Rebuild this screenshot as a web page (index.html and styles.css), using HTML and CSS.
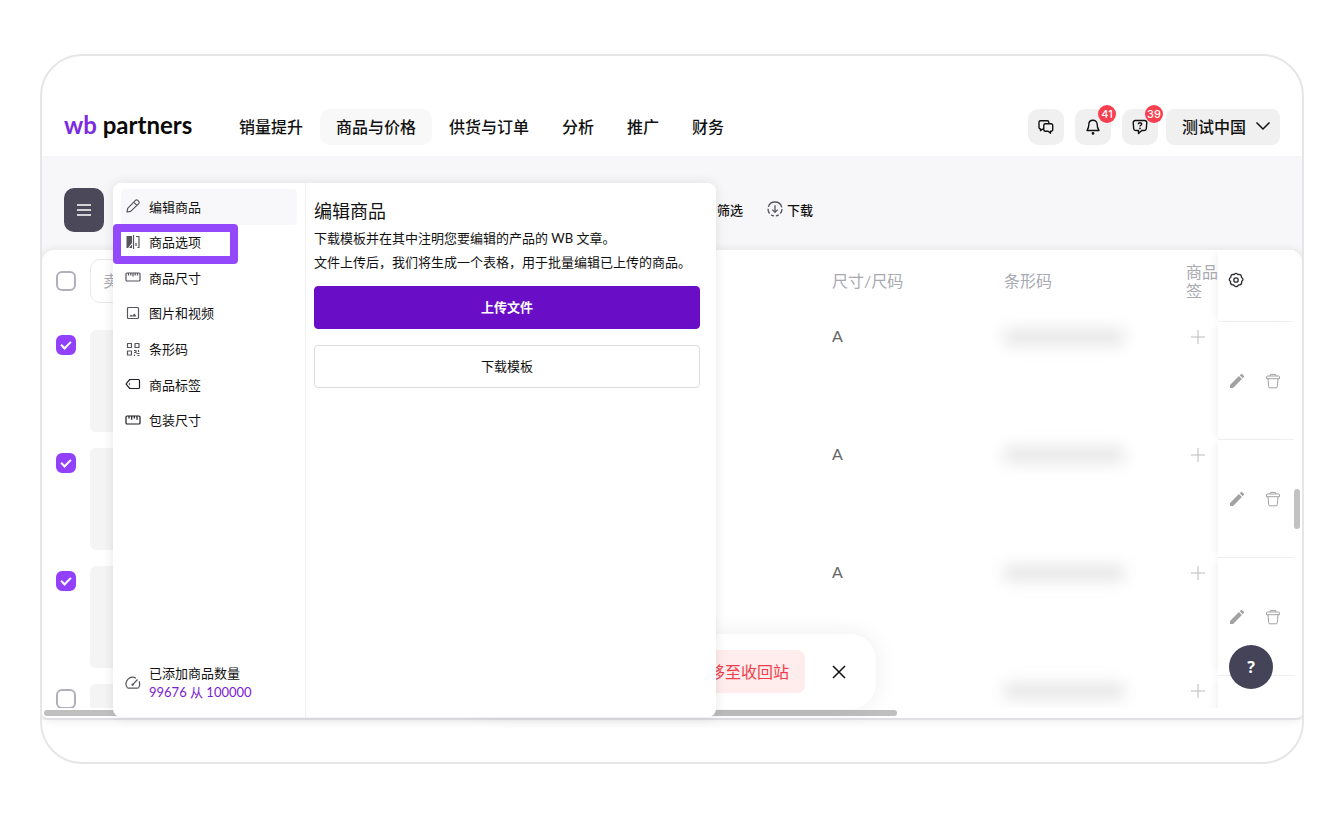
FILE: index.html
```
<!DOCTYPE html>
<html lang="zh-CN">
<head>
    <meta charset="UTF-8">
    <meta name="viewport" content="width=device-width, initial-scale=1.0">
    <title>WB Partners</title>
    <link rel="stylesheet" href="styles.css">
</head>
<body>
    <!-- Shared icons -->
    <svg class="sprite" aria-hidden="true">
        <symbol id="i-plus" viewBox="0 0 14 14">
            <path d="M7 0v14M0 7h14" />
        </symbol>
        <symbol id="i-pencil" viewBox="0 0 16 16">
            <path d="M1 15v-3.1l8.9-8.8 3 3L4.1 15zM10.7 2.3l1.2-1.1a1 1 0 0 1 1.4 0l1.5 1.5a1 1 0 0 1 0 1.4l-1.1 1.2z" />
        </symbol>
        <symbol id="i-trash" viewBox="0 0 16 16">
            <path d="M5 3l.5-1.600h5L11 3M2.500 3h11a1 1 0 0 1 1 1v1.700h-13V4a1 1 0 0 1 1-1zM3 5.700l.7 8a1.200 1.200 0 0 0 1.200 1.100h6.200a1.200 1.200 0 0 0 1.200-1.100l.7-8" />
        </symbol>
    </svg>

    <div class="device">
        <header class="header">
            <a class="logo" href="#"><span class="logo-wb">wb</span> partners</a>
            <nav class="nav">
                <a href="#">销量提升</a>
                <a href="#" class="active">商品与价格</a>
                <a href="#">供货与订单</a>
                <a href="#">分析</a>
                <a href="#">推广</a>
                <a href="#">财务</a>
            </nav>
            <div class="header-actions">
                <button type="button" class="icon-btn" aria-label="聊天">
                    <svg viewBox="0 0 16 16"><path d="M5.800 10.300H4.200L2.500 11.600V10A1.500 1.500 0 0 1 1 8.500V3.200a1.500 1.500 0 0 1 1.500-1.500h6.800a1.500 1.500 0 0 1 1.500 1.500v1.500M7.300 4.700h5.900a1.500 1.500 0 0 1 1.500 1.500v4.600a1.500 1.500 0 0 1-1.500 1.500h-.7v1.900l-2.300-1.900H7.300a1.500 1.500 0 0 1-1.500-1.500V6.200a1.500 1.500 0 0 1 1.500-1.500z" /></svg>
                </button>
                <button type="button" class="icon-btn" aria-label="通知">
                    <svg viewBox="0 0 16 16"><path d="M8 1.300c-2.500 0-4.200 1.900-4.200 4.400 0 2.800-.8 4-1.800 5.800h12c-1-1.800-1.800-3-1.800-5.800 0-2.500-1.700-4.400-4.200-4.400z" /><circle class="dot" cx="8" cy="14.400" r="1.300" /></svg>
                    <span class="badge">41</span>
                </button>
                <button type="button" class="icon-btn" aria-label="帮助">
                    <svg viewBox="0 0 16 16"><path d="M3.200 1.500h9.600a2 2 0 0 1 2 2.200l-.5 6a2 2 0 0 1-2 1.800H9.800l-3.300 3v-3H3.700a2 2 0 0 1-2-1.800l-.5-6a2 2 0 0 1 2-2.200zM6.200 5.200C6.300 3.200 9.800 3.300 9.700 5.200 9.600 6.300 8 6.300 8 7.500" /><circle class="dot" cx="8" cy="9.400" r=".9" /></svg>
                    <span class="badge">39</span>
                </button>
                <button type="button" class="profile">
                    测试中国
                    <svg viewBox="0 0 16 10"><path d="M1.500 1.500L8 8l6.500-6.500" /></svg>
                </button>
            </div>
        </header>

        <main class="workspace">
            <div class="toolbar">
                <button type="button" class="menu-btn" aria-label="菜单">
                    <svg viewBox="0 0 14 12"><path d="M0 1h14M0 6h14M0 11h14" /></svg>
                </button>
                <div class="toolbar-links">
                    <button type="button">筛选</button>
                    <button type="button">
                        <svg viewBox="0 0 16 16"><circle cx="8" cy="8" r="7" stroke-dasharray="5 2 3 2 3 2 5 2 18 2" /><path d="M8 4.200v7M5.200 8.600L8 11.400l2.800-2.800" /></svg>
                        下载
                    </button>
                </div>
            </div>

            <section class="card">
                <div class="table-wrap">
                    <table class="goods">
                        <colgroup>
                            <col class="col-check">
                            <col>
                            <col class="col-size">
                            <col class="col-barcode">
                            <col class="col-tags">
                            <col class="col-actions">
                        </colgroup>
                        <thead>
                            <tr>
                                <th><input type="checkbox" aria-label="全选"></th>
                                <th><input type="text" class="search" placeholder="卖家商品编号" aria-label="卖家商品编号"></th>
                                <th>尺寸/尺码</th>
                                <th>条形码</th>
                                <th>商品签</th>
                                <th class="actions">
                                    <button type="button" class="gear" aria-label="设置">
                                        <svg viewBox="0 0 16 16"><path d="M6.500 2.200Q8 .4 9.500 2.200L10 2.600l.7-.1q2.400-.3 2.700 2.100l.1.700.4.500q1.900 1.500.4 3l-.6.600 0 .9q.2 2.400-2.100 2.600l-1 .1-.6.700Q8 15.700 6.300 13.700l-.7-.7-1-.1q-2.300-.2-2.100-2.600l0-.9-.6-.6q-1.500-1.500.4-3l.4-.5.1-.7q.3-2.400 2.700-2.100l.7.1z" /><circle cx="8" cy="8" r="2.200" /></svg>
                                    </button>
                                </th>
                            </tr>
                        </thead>
                        <tbody>
                            <tr>
                                <td><input type="checkbox" aria-label="选择商品" checked></td>
                                <td><div class="photo"></div></td>
                                <td class="size">A</td>
                                <td><div class="barcode"></div></td>
                                <td><button type="button" class="add" aria-label="添加标签"><svg><use href="#i-plus" /></svg></button></td>
                                <td class="actions">
                                    <button type="button" class="edit" aria-label="编辑"><svg><use href="#i-pencil" /></svg></button>
                                    <button type="button" aria-label="删除"><svg><use href="#i-trash" /></svg></button>
                                </td>
                            </tr>
                            <tr>
                                <td><input type="checkbox" aria-label="选择商品" checked></td>
                                <td><div class="photo"></div></td>
                                <td class="size">A</td>
                                <td><div class="barcode"></div></td>
                                <td><button type="button" class="add" aria-label="添加标签"><svg><use href="#i-plus" /></svg></button></td>
                                <td class="actions">
                                    <button type="button" class="edit" aria-label="编辑"><svg><use href="#i-pencil" /></svg></button>
                                    <button type="button" aria-label="删除"><svg><use href="#i-trash" /></svg></button>
                                </td>
                            </tr>
                            <tr>
                                <td><input type="checkbox" aria-label="选择商品" checked></td>
                                <td><div class="photo"></div></td>
                                <td class="size">A</td>
                                <td><div class="barcode"></div></td>
                                <td><button type="button" class="add" aria-label="添加标签"><svg><use href="#i-plus" /></svg></button></td>
                                <td class="actions">
                                    <button type="button" class="edit" aria-label="编辑"><svg><use href="#i-pencil" /></svg></button>
                                    <button type="button" aria-label="删除"><svg><use href="#i-trash" /></svg></button>
                                </td>
                            </tr>
                            <tr>
                                <td><input type="checkbox" aria-label="选择商品"></td>
                                <td><div class="photo"></div></td>
                                <td></td>
                                <td><div class="barcode"></div></td>
                                <td><button type="button" class="add" aria-label="添加标签"><svg><use href="#i-plus" /></svg></button></td>
                                <td class="actions"></td>
                            </tr>
                        </tbody>
                    </table>
                </div>
                <div class="scroll-x"></div>
                <div class="scroll-y"></div>
            </section>

            <!-- Bulk actions bar -->
            <div class="bulk">
                <button type="button" class="to-trash">移至收回站</button>
                <button type="button" class="close" aria-label="关闭">
                    <svg viewBox="0 0 14 14"><path d="M1 1l12 12M13 1L1 13" /></svg>
                </button>
            </div>

            <!-- Dropdown opened from the menu button -->
            <div class="panel">
                <aside class="panel-side">
                    <ul class="menu">
                        <li><a href="#" class="active"><svg viewBox="0 0 16 16"><path d="M2 14l.7-3.600 7.800-8a1.600 1.600 0 0 1 2.300 0l.9.9a1.600 1.600 0 0 1 0 2.300l-8 7.800zM8.700 4.200l3.100 3.100" /></svg>编辑商品</a></li>
                        <li class="marked"><a href="#"><svg viewBox="0 0 16 16"><path d="M8.500 1v14M11 2.500h3v11h-1.500M11 9v3" /><path class="fill" d="M1.500 2H7v7l-4 5H1.500zM7 10.500V14H4z" /></svg>商品选项</a></li>
                        <li><a href="#"><svg viewBox="0 0 16 16"><rect x="1" y="4" width="14" height="8" rx="1" /><path d="M3.500 4v2.500M5.800 4v2.500M8 4v3.500M10.200 4v2.500M12.500 4v2.500" /></svg>商品尺寸</a></li>
                        <li><a href="#"><svg viewBox="0 0 16 16"><rect x="2.500" y="2.500" width="11" height="11" rx="1" /><path class="fill" d="M4.500 11.500l1.500-2 1.300 1.300L9.500 8.500l2 3z" /></svg>图片和视频</a></li>
                        <li><a href="#"><svg viewBox="0 0 16 16"><path d="M2.500 2.500h4v4h-4zM10 2.500h4v4h-4zM2.500 10h4v4h-4zM9 9.500h2v2H9M13.500 9v2M11.500 12.500h3M9.500 13.500v1.500M12.500 14.500h2" /></svg>条形码</a></li>
                        <li><a href="#" class="dark"><svg viewBox="0 0 16 16"><path d="M4.800 3.500H13.500a1 1 0 0 1 1 1v7a1 1 0 0 1-1 1H4.800L1.500 8.700a1 1 0 0 1 0-1.400z" /><circle class="fill" cx="4.500" cy="8" r=".8" /></svg>商品标签</a></li>
                        <li><a href="#" class="dark"><svg viewBox="0 0 16 16"><rect x="1" y="4" width="14" height="8" rx="1" /><path d="M4 4v2.500M6.700 4v3.800M9.300 4v2.500M12 4v3.800" /></svg>包装尺寸</a></li>
                    </ul>
                    <div class="counter">
                        <svg viewBox="0 0 16 16"><path d="M11 3.200A6.500 6.500 0 0 0 2.300 12.500a1.500 1.500 0 0 0 1.200.6h9a1.500 1.500 0 0 0 1.200-.6 6.500 6.500 0 0 0 .3-6.200" /><path d="M7.500 9.800L12.500 4.500" /><circle class="fill" cx="7.700" cy="9.600" r="1.200" /></svg>
                        <div>
                            <div>已添加商品数量</div>
                            <a href="#">99676 从 100000</a>
                        </div>
                    </div>
                </aside>
                <div class="panel-main">
                    <h2>编辑商品</h2>
                    <p>下载模板并在其中注明您要编辑的产品的 WB 文章。<br>文件上传后，我们将生成一个表格，用于批量编辑已上传的商品。</p>
                    <button type="button" class="btn btn-primary">上传文件</button>
                    <button type="button" class="btn">下载模板</button>
                </div>
            </div>

            <button type="button" class="help">?</button>
        </main>
    </div>
</body>
</html>
```
FILE: styles.css
```
*,
*::after {
    box-sizing: border-box;
}

body {
    margin: 0;
    padding: 54px 40px;
    background-color: #fff;
    color: #111;
    font-family: Lato, "Noto Sans CJK SC", sans-serif;
    font-size: 13px;
}

a {
    color: inherit;
    text-decoration: none;
}

button {
    font: inherit;
    color: inherit;
    background: none;
    border: none;
    padding: 0;
    cursor: pointer;
}

svg {
    display: block;
    flex: none;
    width: 16px;
    height: 16px;
    fill: none;
    stroke: currentColor;
    stroke-linejoin: round;
}

.sprite {
    position: absolute;
    width: 0;
    height: 0;
}

.device {
    border: 2px solid #e6e6e7;
    border-radius: 42px;
    overflow: hidden;
    padding-bottom: 42px;
}

/* Header */
.header {
    display: flex;
    align-items: center;
    padding: 53px 22px 11px;
}

.logo {
    width: 144px;
    padding-bottom: 4px;
    font-family: Lato, sans-serif;
    font-size: 24px;
    font-weight: 700;
    line-height: 32px;
    white-space: nowrap;
    color: #0a0a0a;
}

.logo-wb {
    color: #7b2be0;
}

.nav {
    display: flex;
    gap: 1px;
    margin-left: 15px;
    font-size: 16px;
    font-weight: 500;
}

.nav a {
    padding: 0 16px;
    border-radius: 10px;
    line-height: 36px;
    white-space: nowrap;
}

.nav .active {
    background-color: #f8f8f9;
}

.header-actions {
    display: flex;
    gap: 11px;
    margin-left: auto;
}

.icon-btn {
    position: relative;
    display: flex;
    align-items: center;
    justify-content: center;
    width: 36px;
    height: 36px;
    border-radius: 10px;
    background-color: #f0f0f0;
}

.icon-btn svg {
    stroke-width: 1.4;
}

.icon-btn .dot {
    fill: currentColor;
    stroke: none;
}

.badge {
    position: absolute;
    top: -4px;
    right: -5px;
    width: 18px;
    border-radius: 9px;
    background-color: #f83f50;
    color: #fff;
    font-family: Inter, sans-serif;
    font-size: 11px;
    font-weight: 500;
    line-height: 18px;
    text-align: center;
}

.profile {
    display: flex;
    align-items: center;
    gap: 9px;
    height: 36px;
    margin-left: -3px;
    padding: 0 9px 2px 16px;
    border-radius: 8px;
    background-color: #f0f0f0;
    font-size: 16px;
    font-weight: 500;
}

.profile svg {
    height: 10px;
    stroke-width: 1.5;
}

/* Workspace */
.workspace {
    position: relative;
    background-color: #f7f7f9;
}

.toolbar {
    display: flex;
    align-items: center;
    padding: 32px 22px 18px;
}

.menu-btn {
    display: flex;
    align-items: center;
    justify-content: center;
    width: 40px;
    height: 44px;
    border-radius: 10px;
    background-color: #4a4859;
    color: #fff;
}

.menu-btn svg {
    width: 14px;
    height: 12px;
    stroke-width: 1.3;
}

.toolbar-links {
    display: flex;
    gap: 24px;
    margin-left: 613px;
    padding-bottom: 2px;
    font-weight: 500;
}

.toolbar-links button {
    display: flex;
    align-items: center;
    gap: 4px;
}

.toolbar-links svg {
    color: #55555f;
    stroke-width: 1.3;
}

.card {
    position: relative;
    border-bottom: 2px solid #dfe0e3;
    border-radius: 12px 12px 6px 6px;
    background-color: #fff;
    box-shadow: 0 0 10px rgba(30, 30, 50, 0.1);
}

/* Goods table */
.table-wrap {
    height: 458px;
    overflow: hidden;
    margin-right: 8px;
}

.goods {
    width: 100%;
    table-layout: fixed;
    border-collapse: separate;
    border-spacing: 0;
}

.col-check {
    width: 48px;
}

.col-size {
    width: 172px;
}

.col-barcode {
    width: 182px;
}

.col-tags {
    width: 32px;
}

.col-actions {
    width: 76px;
}

.goods th {
    height: 72px;
    padding: 0 0 11px;
    color: #a9a9b2;
    font-size: 16px;
    font-weight: 400;
    line-height: 19px;
    text-align: left;
}

.goods td {
    height: 118px;
    padding: 8px 0 0;
    vertical-align: top;
}

.goods input[type="checkbox"] {
    appearance: none;
    display: block;
    width: 20px;
    height: 20px;
    margin: 0 14px;
    border: 2px solid #b0b0bd;
    border-radius: 6px;
    background-color: #fff;
}

.goods td input[type="checkbox"] {
    margin-top: 5px;
}

.goods input[type="checkbox"]:checked {
    display: grid;
    place-items: center;
    border-color: #9240fb;
    background-color: #9240fb;
}

.goods input[type="checkbox"]:checked::after {
    content: "";
    width: 10px;
    height: 6px;
    margin-bottom: 3px;
    border: solid #fff;
    border-width: 0 0 2px 2px;
    transform: rotate(-45deg);
}

.search {
    display: block;
    width: 200px;
    height: 44px;
    padding: 0 12px;
    border: 1px solid #e8e8ec;
    border-radius: 10px;
    font: inherit;
}

.search::placeholder {
    color: #a9a9b2;
}

.photo {
    width: 80px;
    height: 102px;
    border-radius: 6px;
    background-color: #f4f4f5;
}

.goods td.size {
    padding-top: 4px;
    color: #666;
    font-size: 16px;
    line-height: 20px;
}

.barcode {
    width: 120px;
    height: 14px;
    background-color: #e2e2e2;
    filter: blur(8px);
}

.add {
    display: block;
    margin-left: 5px;
    color: #bbb;
}

.add svg {
    width: 14px;
    height: 14px;
}

.goods .actions {
    border-bottom: 1px solid #f1f1f1;
    background-color: #fff;
    box-shadow: -5px 0 8px -3px rgba(0, 0, 0, 0.06);
}

.goods td.actions {
    padding: 0 14px 0 11px;
    vertical-align: middle;
    white-space: nowrap;
    font-size: 0;
    color: #a2a2a2;
}

.goods th.actions {
    padding: 0 0 8px 10px;
}

.actions button + button {
    margin-left: 20px;
}

.goods .edit svg {
    fill: currentColor;
    stroke: none;
}

.gear {
    color: #2b2b35;
}

.gear svg {
    stroke-width: 1.3;
}

.scroll-x {
    width: 853px;
    height: 6px;
    margin: 2px 2px;
    border-radius: 3px;
    background-color: #bfbfbf;
}

.scroll-y {
    position: absolute;
    top: 239px;
    right: 2px;
    width: 6px;
    height: 40px;
    border-radius: 3px;
    background-color: #c2c2c2;
}

/* Bulk actions */
.bulk {
    position: absolute;
    right: 426px;
    bottom: 11px;
    left: 426px;
    display: flex;
    align-items: center;
    justify-content: flex-end;
    gap: 27px;
    padding: 16px 30px 16px 16px;
    border-radius: 26px;
    background-color: #fff;
    box-shadow: 0 0 24px rgba(0, 0, 0, 0.07);
}

.to-trash {
    height: 43px;
    padding: 0 16px 2px;
    border-radius: 8px;
    background-color: #ffecec;
    color: #ef3d4b;
    font-size: 16px;
}

.close svg {
    width: 14px;
    height: 14px;
    stroke-width: 1.5;
}

/* Dropdown panel */
.panel {
    position: absolute;
    top: 27px;
    bottom: 3px;
    left: 71px;
    display: grid;
    grid-template-columns: 193px 1fr;
    width: 603px;
    border-radius: 8px;
    background-color: #fff;
    box-shadow: 0 0 12px rgba(0, 0, 0, 0.1);
}

.panel-side {
    display: flex;
    flex-direction: column;
    justify-content: space-between;
    padding: 6px 8px 15px;
    border-right: 1px solid #f0f0f2;
}

.menu {
    display: grid;
    grid-auto-rows: 1fr;
    height: 249px;
    margin: 0;
    padding: 0;
    list-style: none;
}

.menu li {
    position: relative;
}

.menu a {
    display: flex;
    align-items: center;
    gap: 8px;
    height: 100%;
    padding: 0 0 1px 4px;
    border-radius: 4px;
}

.menu .active {
    background-color: #f8f8fa;
}

.menu svg,
.counter svg {
    color: #55555c;
    stroke-width: 1.2;
}

.menu .dark svg {
    color: #1c1c22;
}

.menu .fill,
.counter .fill {
    fill: currentColor;
    stroke: none;
}

/* Frame that lies over the item */
.marked::after {
    content: "";
    position: absolute;
    top: -1px;
    left: -8px;
    width: 125px;
    height: 40px;
    border: 8px solid #9349fb;
    border-radius: 4px;
    pointer-events: none;
}

.counter {
    display: flex;
    align-items: center;
    gap: 8px;
    padding-left: 4px;
    line-height: 19px;
}

.counter a {
    color: #7a22d0;
}

.panel-main {
    display: flex;
    flex-direction: column;
    padding: 14px 16px 0 8px;
}

.panel-main h2 {
    margin: 0;
    font-size: 18px;
    font-weight: 400;
    line-height: 28px;
}

.panel-main p {
    margin: 1px 0 12px;
    line-height: 24px;
    white-space: nowrap;
}

.btn {
    height: 43px;
    padding-bottom: 3px;
    border: 1px solid #dcdce0;
    border-radius: 4px;
}

.btn-primary {
    margin-bottom: 16px;
    border-color: #6a0dc6;
    background-color: #6a0dc6;
    color: #fff;
    font-weight: 700;
}

.help {
    position: absolute;
    right: 29px;
    bottom: 31px;
    width: 44px;
    height: 44px;
    border-radius: 50%;
    background-color: #454357;
    color: #fff;
    font-family: "Noto Sans", sans-serif;
    font-size: 16px;
    font-weight: 700;
}
```
